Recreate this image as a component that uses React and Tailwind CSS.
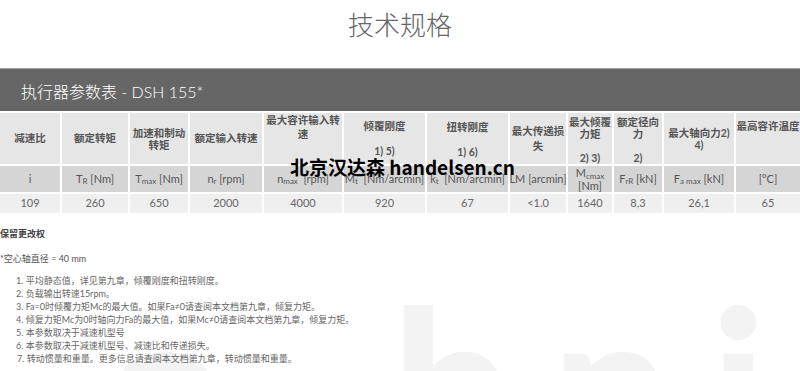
const headCells = [
  { lines: ['减速比'] },
  { lines: ['额定转矩'] },
  { lines: ['加速和制动', '转矩'], lead: 'leading-[12px]' },
  { lines: ['额定输入转速'] },
  { lines: ['最大容许输入转', '速'], lead: 'leading-[14px]', top: true },
  { lines: ['倾覆刚度', '\u00a0', '1) 5)'] },
  { lines: ['扭转刚度', '\u00a0', '1) 6)'], extra: 'pt-[3px]' },
  { lines: ['最大传递损', '失'], lead: 'leading-[15px]' },
  { lines: ['最大倾覆', '力矩', '\u00a0', '2) 3)'], lead: 'leading-[12px]', extra: 'pt-[3px]' },
  { lines: ['额定径向', '力', '\u00a0', '2)'], lead: 'leading-[12px]', extra: 'pt-[3px]' },
  { lines: ['最大轴向力2)', '4)'], lead: 'leading-[12px]' },
  { lines: ['最高容许温度', '\u00a0', '\u00a0'] },
];

const units = [
  <>i</>,
  <>T<sub className="text-[8px]">R</sub>&nbsp;[Nm]</>,
  <>T<sub className="text-[8px]">max</sub>&nbsp;[Nm]</>,
  <>n<sub className="text-[8px]">r</sub>&nbsp;[rpm]</>,
  <>n<sub className="text-[8px]">max</sub>&nbsp; [rpm]</>,
  <>M<sub className="text-[8px]">t</sub>&nbsp; [Nm/arcmin]</>,
  <>k<sub className="text-[8px]">t</sub>&nbsp; [Nm/arcmin]</>,
  <>LM [arcmin]</>,
  <span className="leading-[13px]">M<sub className="text-[8px]">cmax</sub><br />[Nm]</span>,
  <>F<sub className="text-[8px]">rR</sub>&nbsp;[kN]</>,
  <>F<sub className="text-[8px]">a max</sub>&nbsp;[kN]</>,
  <>[°C]</>,
];

const values = ['109', '260', '650', '2000', '4000', '920', '67', '<1.0', '1640', '8,3', '26,1', '65'];

const notes = [
  '平均静态值，详见第九章，倾覆刚度和扭转刚度。',
  '负载输出转速15rpm。',
  'Fa=0时倾覆力矩Mc的最大值。如果Fa≠0请查阅本文档第九章，倾复力矩。',
  '倾复力矩Mc为0时轴向力Fa的最大值，如果Mc≠0请查阅本文档第九章，倾复力矩。',
  '本参数取决于减速机型号',
  '本参数取决于减速机型号、减速比和传递损失。',
  '转动惯量和重量。更多信息请查阅本文档第九章，转动惯量和重量。',
];

export default function App() {
  return (
    <div className="relative w-[800px] h-[371px] overflow-hidden bg-white font-['Lato','Noto_Sans_CJK_SC',sans-serif]">
      <Watermark />

      <div className="relative">
        <div className="h-[68px] flex justify-center pt-[8px]">
          <h1 className="text-[26px] leading-[34px] font-light text-[#666]">技术规格</h1>
        </div>

        <div className="h-[43px] bg-[#666] border-t border-[#a3a3a3] flex items-center pl-[21px] pt-[3px]">
          <h2 className="text-[16px] font-light text-white">执行器参数表 - DSH 155*</h2>
        </div>

        <div className="mt-[2px] grid grid-cols-[60px_66px_58px_72px_78px_81px_81px_56px_44px_48px_70px_64px] gap-[2px] text-center">
          {headCells.map((c, i) => (
            <div
              key={i}
              className={`h-[51px] bg-[#e6e6e6] flex flex-col ${c.top ? 'justify-start' : 'justify-center'} ${c.extra || ''} text-[10.5px] font-bold text-[#555] ${c.lead || 'leading-[12.5px]'}`}
            >
              {c.lines.map((l, j) => (
                <div key={j} className="whitespace-nowrap">{l}</div>
              ))}
            </div>
          ))}
          {units.map((u, i) => (
            <div key={i} className="h-[26px] bg-[#d5d5d5] flex items-center justify-center text-[11px] text-[#555] whitespace-nowrap">
              {u}
            </div>
          ))}
          {values.map((v, i) => (
            <div key={i} className="h-[19px] bg-[#efefef] flex items-center justify-center text-[11px] text-[#666]">
              {v}
            </div>
          ))}
        </div>

        <div className="mt-[14px] text-[9px] text-[#555]">
          <p className="font-bold text-[#444] leading-[13px]">保留更改权</p>
          <p className="mt-[12px] leading-[13px]">*空心轴直径 = 40 mm</p>
          <ol className="mt-[9px] pl-[16px] leading-[13px] text-[#666]">
            {notes.map((n, i) => (
              <li key={i} className={i === 6 ? 'pl-[1px]' : ''}>{i + 1}. {n}</li>
            ))}
          </ol>
        </div>
      </div>

      <div className="absolute left-[290px] top-[154px] text-[19px] leading-[26px] font-bold text-black font-['Noto_Sans_CJK_SC',sans-serif] whitespace-nowrap">
        北京汉达森 handelsen.cn
      </div>
    </div>
  );
}

function Watermark() {
  return (
    <svg className="absolute inset-0 pointer-events-none" width="800" height="371" viewBox="0 0 800 371">
      <g fill="#f3f3f3" fontFamily="Lato, sans-serif" fontWeight="900" fontSize="210">
        <text x="104" y="462">o</text>
        <text x="392" y="462">b</text>
        <text x="552" y="462">n</text>
        <text x="711" y="462">i</text>
      </g>
    </svg>
  );
}
